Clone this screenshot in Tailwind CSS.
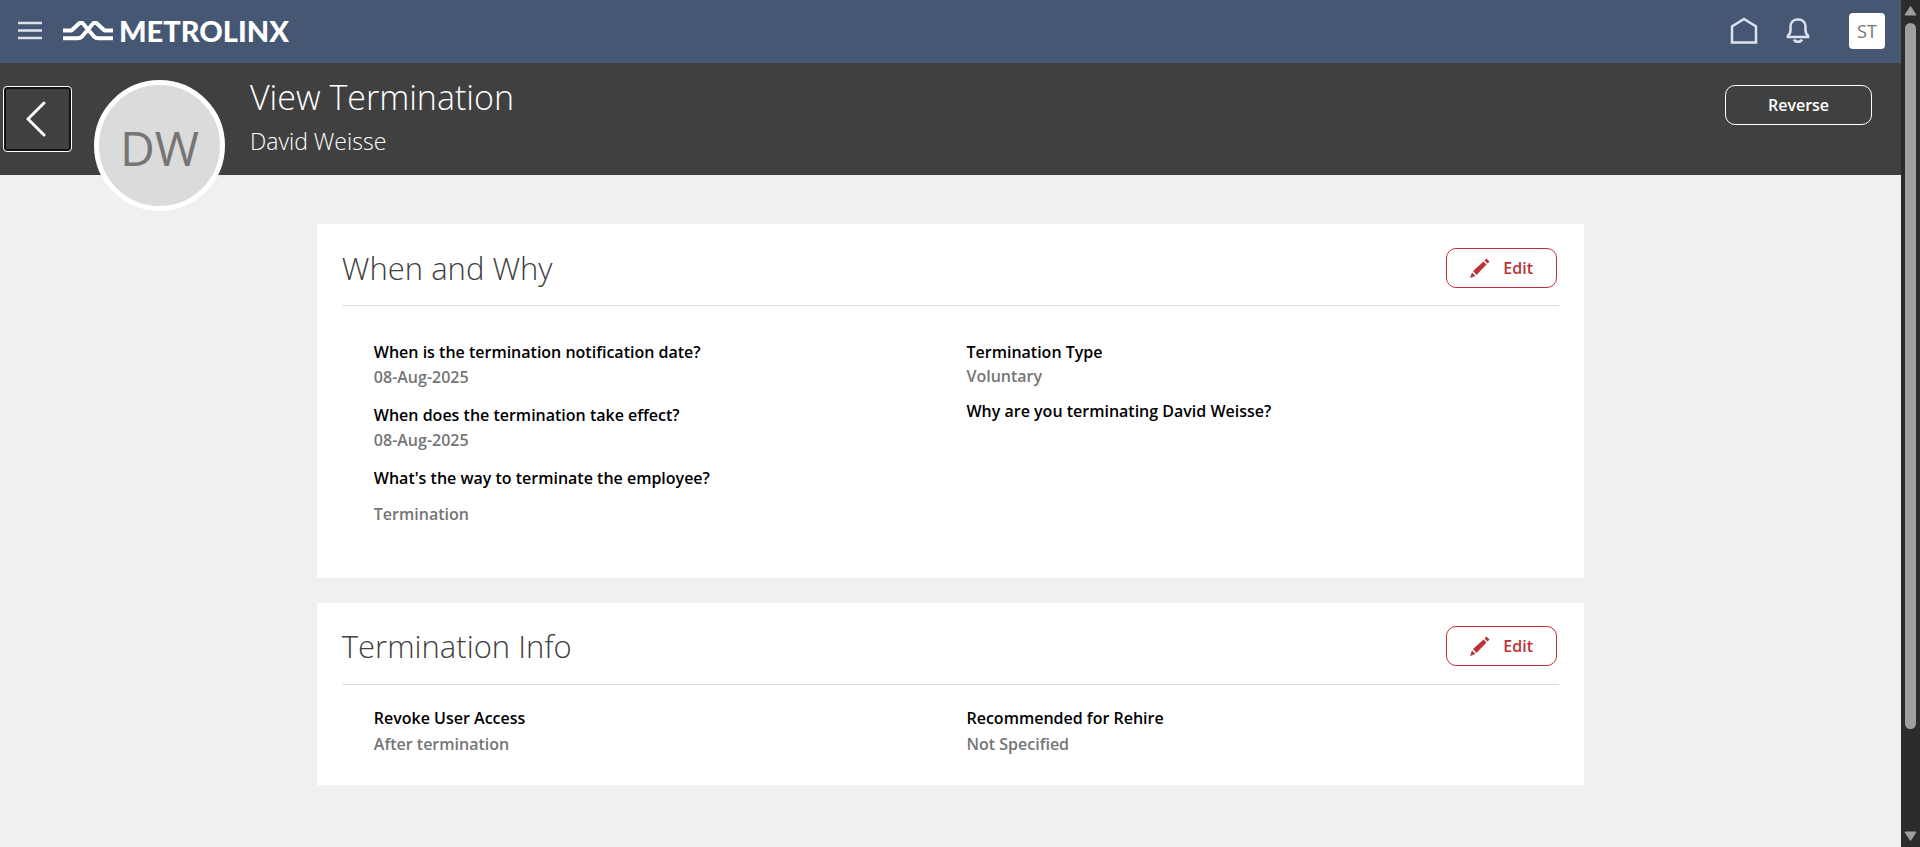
<!DOCTYPE html>
<html lang="en">
<head>
<meta charset="utf-8">
<meta name="viewport" content="width=device-width, initial-scale=1">
<title>View Termination</title>
<script src="https://cdn.jsdelivr.net/npm/@tailwindcss/browser@4"></script>
</head>
<body class="flex h-screen overflow-hidden bg-[#f0f0f0] font-['Segoe_UI','Open_Sans','Noto_Sans',sans-serif] text-black">
<div class="flex min-w-0 flex-1 flex-col">
  <header class="flex h-[63px] shrink-0 items-center bg-[#455772] pr-4 pb-[2px] pl-[18px] text-[#dbe3ef]">
    <button type="button" aria-label="Navigator" class="flex">
      <svg class="h-[19px] w-6" viewBox="0 0 24 19" stroke="currentColor" stroke-width="2.500" fill="none"><path d="M0 2h24M0 9.500h24M0 17h24"/></svg>
    </button>
    <a href="#" aria-label="Metrolinx home" class="ml-[21px] flex items-center gap-[6px] text-white">
      <svg class="h-[22px] w-[50px]" viewBox="0 0 50 22" fill="none" stroke="currentColor" stroke-width="4" stroke-linejoin="bevel"><path d="M0 10.500h8.500L16.500 3h3L31 16.500c1.500 1.500 2.500 1.800 4 1.800h15"/><path d="M50 10.500h-8.500L33.500 3h-3L19 16.500c-1.500 1.500-2.500 1.800-4 1.800H0"/></svg>
      <span class="font-['Lato',sans-serif] text-[29px] leading-8 font-black">METROLINX</span>
    </a>
    <nav class="ml-auto flex items-center">
      <a href="#" aria-label="Home" class="flex"><svg class="h-[27px] w-[28px]" viewBox="0 0 28 27" fill="none" stroke="currentColor" stroke-width="2.500"><path d="M2 9.500v16h24v-16L14 2z"/></svg></a>
      <button type="button" aria-label="Notifications" class="ml-7 flex"><svg class="h-[27px] w-[24px]" viewBox="0 0 24 27" fill="none" stroke="currentColor" stroke-width="2.500"><path d="M2 20v-1.500c2-1.500 2.500-3 2.500-5.500V9.500C4.500 5 7.500 2.500 12 2.500s7.500 2.500 7.500 7V13c0 2.500.5 4 2.500 5.500V20z"/><path d="M8 22.500c1 3 7 3 8 0"/></svg></button>
      <button type="button" aria-label="Settings and Actions" class="ml-[39px] size-9 rounded-[4px] bg-white text-lg text-[#757575]">ST</button>
    </nav>
  </header>

  <section class="flex h-[112px] shrink-0 items-start bg-[#404040] pr-[29px] pl-[3px] text-white">
    <button type="button" aria-label="Back" class="mt-[23px] flex h-[66px] w-[69px] items-center justify-center rounded-[4px] border border-white pr-1 shadow-[inset_0_0_0_2px_#111]">
      <svg class="h-9 w-5" viewBox="0 0 20 36" fill="none" stroke="currentColor" stroke-width="3" stroke-linecap="round" stroke-linejoin="round"><path d="M18 2 2 18l16 16"/></svg>
    </button>
    <div class="mt-[17px] ml-[22px] flex size-[131px] shrink-0 items-center justify-center rounded-full border-5 border-white bg-[#dbdbdb] pt-1 text-5xl text-[#757575]">DW</div>
    <div class="ml-[25px] pt-[10px] font-light">
      <h1 class="text-[34px] leading-[48px]">View Termination</h1>
      <p class="text-[23px] leading-10">David Weisse</p>
    </div>
    <button type="button" class="mt-[22px] ml-auto h-10 w-[147px] rounded-[10px] border border-white text-base font-semibold">Reverse</button>
  </section>

  <main class="mx-auto flex w-2/3 flex-col gap-[25px] pt-[49px]">
    <section class="bg-white px-[25px]">
      <div class="flex h-[82px] items-center justify-between border-b border-[#d3e0ea] pt-[7px] pr-[2px]">
        <h2 class="text-[31px] font-light text-[#404040]">When and Why</h2>
        <button type="button" class="flex h-10 w-[111px] items-center justify-center gap-[13px] rounded-[10px] border border-[#bb3239] text-base font-semibold text-[#bb3239]">
          <svg class="size-5" viewBox="0 0 20 20" fill="currentColor"><path d="M0 20l2-5.500 3.500 3.500zM3 13 13.500 3.500l3 3L6.500 17zM14.500 2.500 16.500.500l3 3-2 2z"/></svg>Edit
        </button>
      </div>
      <div class="grid grid-cols-2 pt-[34px] pb-[51px] pl-8 text-base font-semibold">
        <dl class="leading-[25px]">
          <dt>When is the termination notification date?</dt>
          <dd class="text-[#757575]">08-Aug-2025</dd>
          <dt class="mt-[13px]">When does the termination take effect?</dt>
          <dd class="text-[#757575]">08-Aug-2025</dd>
          <dt class="mt-[13px]">What's the way to terminate the employee?</dt>
          <dd class="mt-[11px] text-[#757575]">Termination</dd>
        </dl>
        <dl class="leading-6">
          <dt>Termination Type</dt>
          <dd class="text-[#757575]">Voluntary</dd>
          <dt class="mt-[11px]">Why are you terminating David Weisse?</dt>
        </dl>
      </div>
    </section>

    <section class="bg-white px-[25px]">
      <div class="flex h-[82px] items-center justify-between border-b border-[#d6dde7] pt-[5px] pr-[2px]">
        <h2 class="text-[31px] font-light text-[#404040]">Termination Info</h2>
        <button type="button" class="flex h-10 w-[111px] items-center justify-center gap-[13px] rounded-[10px] border border-[#bb3239] text-base font-semibold text-[#bb3239]">
          <svg class="size-5" viewBox="0 0 20 20" fill="currentColor"><path d="M0 20l2-5.500 3.500 3.500zM3 13 13.500 3.500l3 3L6.500 17zM14.500 2.500 16.500.500l3 3-2 2z"/></svg>Edit
        </button>
      </div>
      <div class="grid grid-cols-2 pt-5 pb-7 pl-8 text-base leading-[26px] font-semibold">
        <dl class="leading-[26px]">
          <dt>Revoke User Access</dt>
          <dd class="text-[#757575]">After termination</dd>
        </dl>
        <dl class="leading-[26px]">
          <dt>Recommended for Rehire</dt>
          <dd class="text-[#757575]">Not Specified</dd>
        </dl>
      </div>
    </section>
  </main>
</div>

<div aria-hidden="true" class="flex w-[19px] shrink-0 flex-col items-center bg-[#2c2c2c] py-[5px] text-[#9f9f9f]">
  <svg class="h-[11px] w-[13px] shrink-0" viewBox="0 0 13 11" fill="currentColor" stroke="currentColor" stroke-width="1" stroke-linejoin="round"><path d="M6.500 1.500 12 10H1z"/></svg>
  <div class="mt-[7px] w-[11px] flex-[707] rounded-full bg-current"></div>
  <div class="flex-[102]"></div>
  <svg class="h-[11px] w-[13px] shrink-0" viewBox="0 0 13 11" fill="currentColor" stroke="currentColor" stroke-width="1" stroke-linejoin="round"><path d="M6.500 9.500 12 1H1z"/></svg>
</div>
</body>
</html>
